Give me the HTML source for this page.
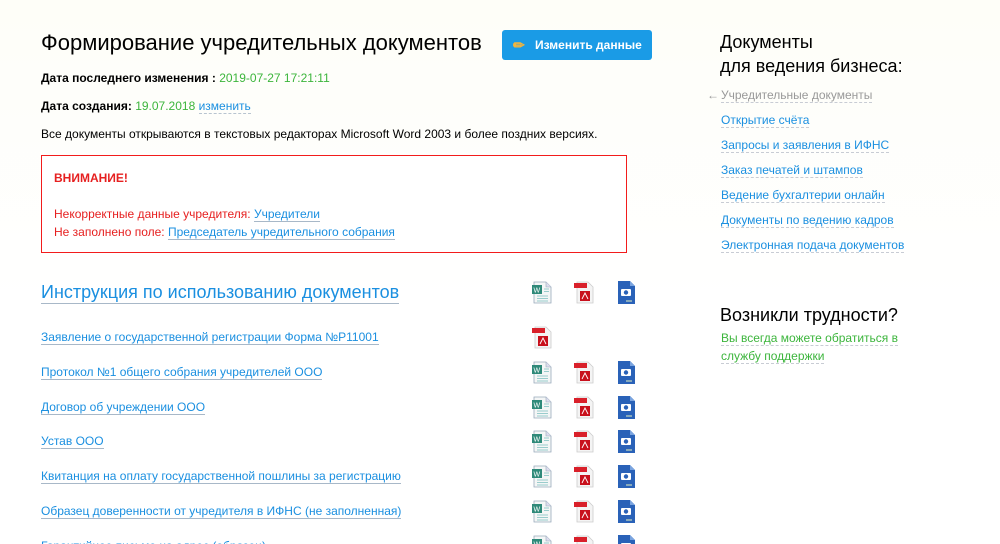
<!DOCTYPE html>
<html style="overflow:hidden;height:544px"><head><meta charset="utf-8"><style>
body{margin:0;width:1000px;height:544px;overflow:hidden;background:linear-gradient(#fefef8,#ffffff 300px);font-family:"Liberation Sans",Arial,sans-serif;position:relative;color:#000}
.a{position:absolute;white-space:nowrap}
h1{position:absolute;left:41px;top:30px;margin:0;font-size:22px;font-weight:normal;white-space:nowrap}
.btn{position:absolute;left:502px;top:30px;width:150px;height:30px;background:#1a9be6;border-radius:3px;color:#fff;font-weight:bold;font-size:12px;line-height:30px}
.s{font-size:12px}
.g{color:#3cb53c}
.l{color:#1a8fe0;border-bottom:1px dashed #b8c4d0}
.ls{color:#1a8fe0;border-bottom:1px solid #a8b8c8;font-size:12px}
.box{position:absolute;left:41px;top:155px;width:584px;height:96px;border:1px solid #f21c1c;background:#fff}
.r{color:#e62020}
.side{position:absolute;left:721px;font-size:12px;color:#1a8fe0}
.side span{border-bottom:1px dashed #c8ccd4}
svg{position:absolute}
</style></head><body>
<svg width="0" height="0" style="position:absolute"><defs>
<symbol id="w" viewBox="0 0 26 26"><path d="M5 3h12l5 5v16H5z" fill="#f4f6f6" stroke="#9ab" stroke-width=".8"/><path d="M17 3v5h5" fill="#dde" stroke="#9ab" stroke-width=".6"/><rect x="3" y="6" width="10" height="9" fill="#2f8a7a"/><text x="4.5" y="13.5" font-size="7" fill="#fff" font-family="Liberation Sans">W</text><path d="M8 17h11M8 19.5h11M8 22h11M15 10h5M15 12.5h5" stroke="#9cc" stroke-width=".9"/></symbol>
<symbol id="p" viewBox="0 0 26 26"><path d="M6 3h11l5 5v16H6z" fill="#f4f4f4" stroke="#ccc" stroke-width=".8"/><rect x="3" y="4" width="13" height="5" fill="#d9202a"/><rect x="9" y="12" width="10" height="10" fill="#c8101c"/><path d="M11 20l3-6 3 6" stroke="#fff" fill="none" stroke-width=".9"/></symbol>
<symbol id="j" viewBox="0 0 26 26"><path d="M5 2h12l5 5v18H5z" fill="#2a62b8"/><path d="M17 2v5h5" fill="#7aa4e0"/><rect x="8" y="10" width="10" height="7" rx="1" fill="#fff"/><circle cx="13" cy="13.5" r="2.2" fill="#2a62b8"/><rect x="13" y="21" width="6" height="2" fill="#8ab"/></symbol>
</defs></svg>
<h1>Формирование учредительных документов</h1>
<div class="btn"><span style="position:absolute;left:11px;top:0;font-size:14px;color:#f3b53c">✏</span><span style="position:absolute;left:33px">Изменить данные</span></div>
<div class="a s" style="left:41px;top:71px"><b>Дата последнего изменения :</b> <span class="g">2019-07-27 17:21:11</span></div>
<div class="a s" style="left:41px;top:99px"><b>Дата создания:</b> <span class="g">19.07.2018</span> <span class="l">изменить</span></div>
<div class="a s" style="left:41px;top:127px">Все документы открываются в текстовых редакторах Microsoft Word 2003 и более поздних версиях.</div>
<div class="box"></div>
<div class="a s r" style="left:54px;top:171px;font-weight:bold">ВНИМАНИЕ!</div>
<div class="a s r" style="left:54px;top:207px">Некорректные данные учредителя: <span class="ls">Учредители</span></div>
<div class="a s r" style="left:54px;top:225px">Не заполнено поле: <span class="ls">Председатель учредительного собрания</span></div>
<div class="a" style="left:41px;top:282px;font-size:18px;color:#1a8fe0;border-bottom:1px solid #a8b8c8;line-height:21px">Инструкция по использованию документов</div>
<svg style="left:529px;top:279px" width="26" height="26"><use href="#w"/></svg>
<svg style="left:571px;top:279px" width="26" height="26"><use href="#p"/></svg>
<svg style="left:613px;top:279px" width="26" height="26"><use href="#j"/></svg>
<div class="a ls" style="left:41px;top:330px">Заявление о государственной регистрации Форма №Р11001</div>
<svg style="left:529px;top:324px" width="26" height="26"><use href="#p"/></svg>
<div class="a ls" style="left:41px;top:365px">Протокол №1 общего собрания учредителей ООО</div>
<div class="a ls" style="left:41px;top:400px">Договор об учреждении ООО</div>
<div class="a ls" style="left:41px;top:434px">Устав ООО</div>
<div class="a ls" style="left:41px;top:469px">Квитанция на оплату государственной пошлины за регистрацию</div>
<div class="a ls" style="left:41px;top:504px">Образец доверенности от учредителя в ИФНС (не заполненная)</div>
<div class="a ls" style="left:41px;top:539px">Гарантийное письмо на адрес (образец)</div>
<svg style="left:529px;top:359px" width="26" height="26"><use href="#w"/></svg><svg style="left:571px;top:359px" width="26" height="26"><use href="#p"/></svg><svg style="left:613px;top:359px" width="26" height="26"><use href="#j"/></svg>
<svg style="left:529px;top:394px" width="26" height="26"><use href="#w"/></svg><svg style="left:571px;top:394px" width="26" height="26"><use href="#p"/></svg><svg style="left:613px;top:394px" width="26" height="26"><use href="#j"/></svg>
<svg style="left:529px;top:428px" width="26" height="26"><use href="#w"/></svg><svg style="left:571px;top:428px" width="26" height="26"><use href="#p"/></svg><svg style="left:613px;top:428px" width="26" height="26"><use href="#j"/></svg>
<svg style="left:529px;top:463px" width="26" height="26"><use href="#w"/></svg><svg style="left:571px;top:463px" width="26" height="26"><use href="#p"/></svg><svg style="left:613px;top:463px" width="26" height="26"><use href="#j"/></svg>
<svg style="left:529px;top:498px" width="26" height="26"><use href="#w"/></svg><svg style="left:571px;top:498px" width="26" height="26"><use href="#p"/></svg><svg style="left:613px;top:498px" width="26" height="26"><use href="#j"/></svg>
<svg style="left:529px;top:533px" width="26" height="26"><use href="#w"/></svg><svg style="left:571px;top:533px" width="26" height="26"><use href="#p"/></svg><svg style="left:613px;top:533px" width="26" height="26"><use href="#j"/></svg>
<div class="a" style="left:720px;top:30px;font-size:18px;line-height:24px">Документы<br>для ведения бизнеса:</div>
<div class="side" style="top:88px;color:#999"><span style="border:0;position:absolute;left:-14px">←</span><span>Учредительные документы</span></div>
<div class="side" style="top:113px"><span>Открытие счёта</span></div>
<div class="side" style="top:138px"><span>Запросы и заявления в ИФНС</span></div>
<div class="side" style="top:163px"><span>Заказ печатей и штампов</span></div>
<div class="side" style="top:188px"><span>Ведение бухгалтерии онлайн</span></div>
<div class="side" style="top:213px"><span>Документы по ведению кадров</span></div>
<div class="side" style="top:238px"><span>Электронная подача документов</span></div>
<div class="a" style="left:720px;top:305px;font-size:18px">Возникли трудности?</div>
<div class="side" style="top:329px;color:#3cb53c;line-height:18px"><span>Вы всегда можете обратиться в</span><br><span>службу поддержки</span></div>
</body></html>
